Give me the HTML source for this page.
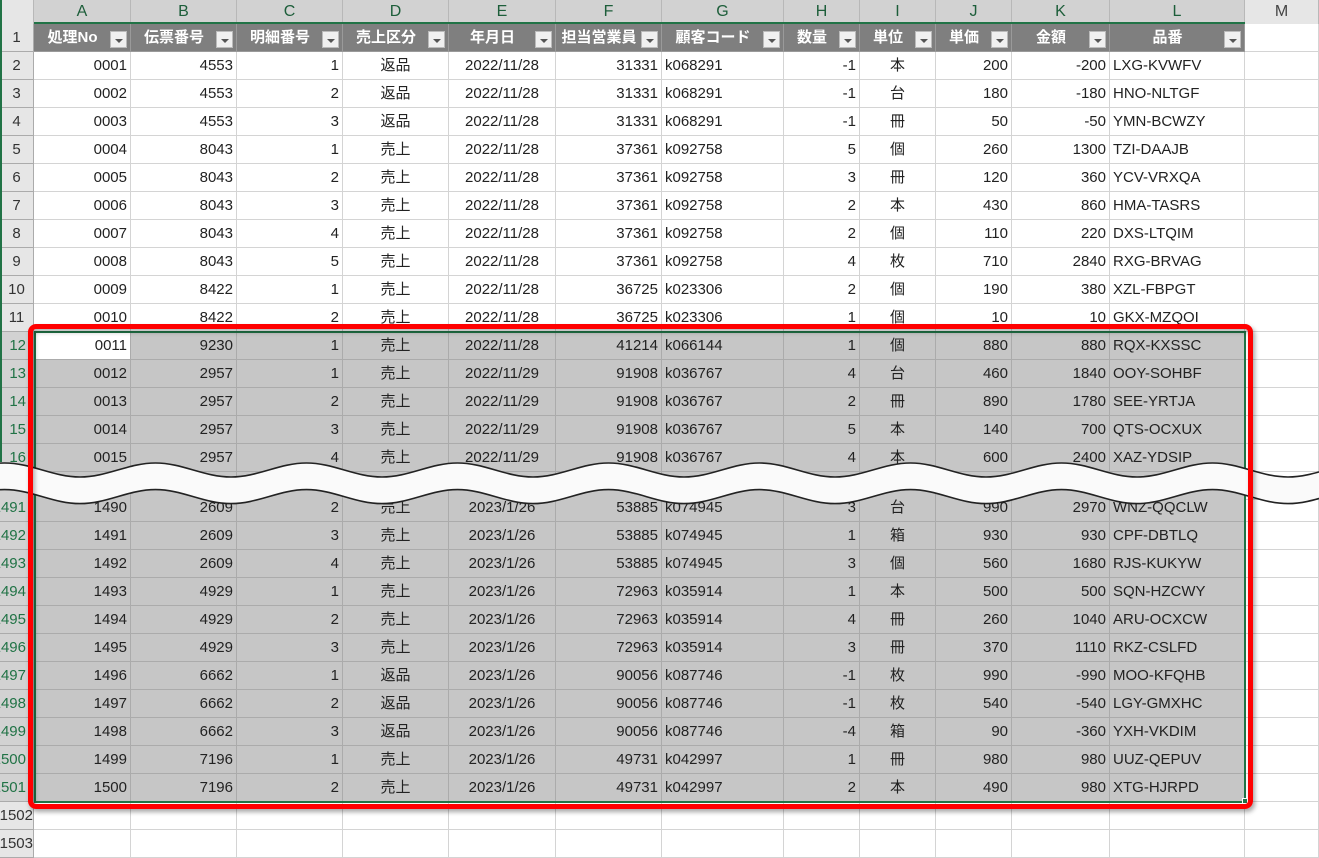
<!DOCTYPE html>
<html><head><meta charset="utf-8">
<style>
*{margin:0;padding:0;box-sizing:border-box}
body{width:1319px;height:856px;overflow:hidden;background:#fff;position:relative;font-family:"Liberation Sans","Noto Sans CJK JP",sans-serif;font-size:15px;color:#222}
.r{position:absolute;left:0;height:28px;display:flex;width:1319px}
.c{height:28px;border-right:1px solid #d4d4d4;border-bottom:1px solid #d4d4d4;padding:0 3px;line-height:28px;white-space:nowrap;overflow:hidden;flex:none;position:relative}
.c:nth-child(1){width:34px;background:#e6e6e6;border-color:#ababab;text-align:center;padding:0;color:#333;font-size:15px;overflow:visible;direction:rtl}
.c:nth-child(2){width:97px;text-align:right}
.c:nth-child(3){width:106px;text-align:right}
.c:nth-child(4){width:106px;text-align:right}
.c:nth-child(5){width:106px;text-align:center}
.c:nth-child(6){width:107px;text-align:center}
.c:nth-child(7){width:106px;text-align:right}
.c:nth-child(8){width:122px;text-align:left}
.c:nth-child(9){width:76px;text-align:right}
.c:nth-child(10){width:76px;text-align:center}
.c:nth-child(11){width:76px;text-align:right}
.c:nth-child(12){width:98px;text-align:right}
.c:nth-child(13){width:135px;text-align:left}
.c:nth-child(14){width:74px}
.s .c:nth-child(n+2):nth-child(-n+13){background:#c6c6c6;border-color:#ababab}
.s .c:nth-child(1){background:#d2d2d2;color:#217346;text-align:right;padding-right:7px}
.s .c.w{background:#fff!important}
.hd .c:nth-child(n+2):nth-child(-n+13){background:#7f7f7f;color:#fff;font-weight:bold;text-align:center;padding-right:22px;border-color:#9a9a9a}
.fb{position:absolute;right:3px;top:7px;width:17px;height:17px;background:#f0f0f0;border:1px solid #bbb}
.fb:after{content:"";position:absolute;left:4px;top:7px;border-left:4px solid transparent;border-right:4px solid transparent;border-top:4px solid #555}
.ch{position:absolute;top:0;left:0;height:24px;display:flex;border-bottom:1px solid #ababab}
.ch div{height:24px;border-right:1px solid #b8b8b8;background:#d2d2d2;text-align:center;line-height:24px;color:#1d5e3a;font-size:16px;flex:none}
</style></head><body>
<div class="ch">
<div style="width:34px;background:#e6e6e6"></div><div style="width:97px">A</div><div style="width:106px">B</div><div style="width:106px">C</div><div style="width:106px">D</div><div style="width:107px">E</div><div style="width:106px">F</div><div style="width:122px">G</div><div style="width:76px">H</div><div style="width:76px">I</div><div style="width:76px">J</div><div style="width:98px">K</div><div style="width:135px">L</div><div style="width:74px;background:#e6e6e6;color:#444">M</div>
</div>
<div style="position:absolute;left:34px;top:22px;width:1211px;height:2px;background:#217346"></div>

<div class="r hd" style="top:24px"><div class="c">1</div><div class="c">処理No<span class="fb"></span></div><div class="c">伝票番号<span class="fb"></span></div><div class="c">明細番号<span class="fb"></span></div><div class="c">売上区分<span class="fb"></span></div><div class="c">年月日<span class="fb"></span></div><div class="c">担当営業員<span class="fb"></span></div><div class="c">顧客コード<span class="fb"></span></div><div class="c">数量<span class="fb"></span></div><div class="c">単位<span class="fb"></span></div><div class="c">単価<span class="fb"></span></div><div class="c">金額<span class="fb"></span></div><div class="c">品番<span class="fb"></span></div><div class="c"></div></div>

<div class="r" style="top:52px"><div class="c">2</div><div class="c">0001</div><div class="c">4553</div><div class="c">1</div><div class="c">返品</div><div class="c">2022/11/28</div><div class="c">31331</div><div class="c">k068291</div><div class="c">-1</div><div class="c">本</div><div class="c">200</div><div class="c">-200</div><div class="c">LXG-KVWFV</div><div class="c"></div></div>
<div class="r" style="top:80px"><div class="c">3</div><div class="c">0002</div><div class="c">4553</div><div class="c">2</div><div class="c">返品</div><div class="c">2022/11/28</div><div class="c">31331</div><div class="c">k068291</div><div class="c">-1</div><div class="c">台</div><div class="c">180</div><div class="c">-180</div><div class="c">HNO-NLTGF</div><div class="c"></div></div>
<div class="r" style="top:108px"><div class="c">4</div><div class="c">0003</div><div class="c">4553</div><div class="c">3</div><div class="c">返品</div><div class="c">2022/11/28</div><div class="c">31331</div><div class="c">k068291</div><div class="c">-1</div><div class="c">冊</div><div class="c">50</div><div class="c">-50</div><div class="c">YMN-BCWZY</div><div class="c"></div></div>
<div class="r" style="top:136px"><div class="c">5</div><div class="c">0004</div><div class="c">8043</div><div class="c">1</div><div class="c">売上</div><div class="c">2022/11/28</div><div class="c">37361</div><div class="c">k092758</div><div class="c">5</div><div class="c">個</div><div class="c">260</div><div class="c">1300</div><div class="c">TZI-DAAJB</div><div class="c"></div></div>
<div class="r" style="top:164px"><div class="c">6</div><div class="c">0005</div><div class="c">8043</div><div class="c">2</div><div class="c">売上</div><div class="c">2022/11/28</div><div class="c">37361</div><div class="c">k092758</div><div class="c">3</div><div class="c">冊</div><div class="c">120</div><div class="c">360</div><div class="c">YCV-VRXQA</div><div class="c"></div></div>
<div class="r" style="top:192px"><div class="c">7</div><div class="c">0006</div><div class="c">8043</div><div class="c">3</div><div class="c">売上</div><div class="c">2022/11/28</div><div class="c">37361</div><div class="c">k092758</div><div class="c">2</div><div class="c">本</div><div class="c">430</div><div class="c">860</div><div class="c">HMA-TASRS</div><div class="c"></div></div>
<div class="r" style="top:220px"><div class="c">8</div><div class="c">0007</div><div class="c">8043</div><div class="c">4</div><div class="c">売上</div><div class="c">2022/11/28</div><div class="c">37361</div><div class="c">k092758</div><div class="c">2</div><div class="c">個</div><div class="c">110</div><div class="c">220</div><div class="c">DXS-LTQIM</div><div class="c"></div></div>
<div class="r" style="top:248px"><div class="c">9</div><div class="c">0008</div><div class="c">8043</div><div class="c">5</div><div class="c">売上</div><div class="c">2022/11/28</div><div class="c">37361</div><div class="c">k092758</div><div class="c">4</div><div class="c">枚</div><div class="c">710</div><div class="c">2840</div><div class="c">RXG-BRVAG</div><div class="c"></div></div>
<div class="r" style="top:276px"><div class="c">10</div><div class="c">0009</div><div class="c">8422</div><div class="c">1</div><div class="c">売上</div><div class="c">2022/11/28</div><div class="c">36725</div><div class="c">k023306</div><div class="c">2</div><div class="c">個</div><div class="c">190</div><div class="c">380</div><div class="c">XZL-FBPGT</div><div class="c"></div></div>
<div class="r" style="top:304px"><div class="c">11</div><div class="c">0010</div><div class="c">8422</div><div class="c">2</div><div class="c">売上</div><div class="c">2022/11/28</div><div class="c">36725</div><div class="c">k023306</div><div class="c">1</div><div class="c">個</div><div class="c">10</div><div class="c">10</div><div class="c">GKX-MZQOI</div><div class="c"></div></div>
<div class="r s" style="top:332px"><div class="c">12</div><div class="c w">0011</div><div class="c">9230</div><div class="c">1</div><div class="c">売上</div><div class="c">2022/11/28</div><div class="c">41214</div><div class="c">k066144</div><div class="c">1</div><div class="c">個</div><div class="c">880</div><div class="c">880</div><div class="c">RQX-KXSSC</div><div class="c"></div></div>
<div class="r s" style="top:360px"><div class="c">13</div><div class="c">0012</div><div class="c">2957</div><div class="c">1</div><div class="c">売上</div><div class="c">2022/11/29</div><div class="c">91908</div><div class="c">k036767</div><div class="c">4</div><div class="c">台</div><div class="c">460</div><div class="c">1840</div><div class="c">OOY-SOHBF</div><div class="c"></div></div>
<div class="r s" style="top:388px"><div class="c">14</div><div class="c">0013</div><div class="c">2957</div><div class="c">2</div><div class="c">売上</div><div class="c">2022/11/29</div><div class="c">91908</div><div class="c">k036767</div><div class="c">2</div><div class="c">冊</div><div class="c">890</div><div class="c">1780</div><div class="c">SEE-YRTJA</div><div class="c"></div></div>
<div class="r s" style="top:416px"><div class="c">15</div><div class="c">0014</div><div class="c">2957</div><div class="c">3</div><div class="c">売上</div><div class="c">2022/11/29</div><div class="c">91908</div><div class="c">k036767</div><div class="c">5</div><div class="c">本</div><div class="c">140</div><div class="c">700</div><div class="c">QTS-OCXUX</div><div class="c"></div></div>
<div class="r s" style="top:444px"><div class="c">16</div><div class="c">0015</div><div class="c">2957</div><div class="c">4</div><div class="c">売上</div><div class="c">2022/11/29</div><div class="c">91908</div><div class="c">k036767</div><div class="c">4</div><div class="c">本</div><div class="c">600</div><div class="c">2400</div><div class="c">XAZ-YDSIP</div><div class="c"></div></div>
<div class="r s" style="top:472px"><div class="c"></div><div class="c"></div><div class="c"></div><div class="c"></div><div class="c"></div><div class="c"></div><div class="c"></div><div class="c"></div><div class="c"></div><div class="c"></div><div class="c"></div><div class="c"></div><div class="c"></div><div class="c"></div></div>
<div class="r s" style="top:494px"><div class="c">1491</div><div class="c">1490</div><div class="c">2609</div><div class="c">2</div><div class="c">売上</div><div class="c">2023/1/26</div><div class="c">53885</div><div class="c">k074945</div><div class="c">3</div><div class="c">台</div><div class="c">990</div><div class="c">2970</div><div class="c">WNZ-QQCLW</div><div class="c"></div></div>
<div class="r s" style="top:522px"><div class="c">1492</div><div class="c">1491</div><div class="c">2609</div><div class="c">3</div><div class="c">売上</div><div class="c">2023/1/26</div><div class="c">53885</div><div class="c">k074945</div><div class="c">1</div><div class="c">箱</div><div class="c">930</div><div class="c">930</div><div class="c">CPF-DBTLQ</div><div class="c"></div></div>
<div class="r s" style="top:550px"><div class="c">1493</div><div class="c">1492</div><div class="c">2609</div><div class="c">4</div><div class="c">売上</div><div class="c">2023/1/26</div><div class="c">53885</div><div class="c">k074945</div><div class="c">3</div><div class="c">個</div><div class="c">560</div><div class="c">1680</div><div class="c">RJS-KUKYW</div><div class="c"></div></div>
<div class="r s" style="top:578px"><div class="c">1494</div><div class="c">1493</div><div class="c">4929</div><div class="c">1</div><div class="c">売上</div><div class="c">2023/1/26</div><div class="c">72963</div><div class="c">k035914</div><div class="c">1</div><div class="c">本</div><div class="c">500</div><div class="c">500</div><div class="c">SQN-HZCWY</div><div class="c"></div></div>
<div class="r s" style="top:606px"><div class="c">1495</div><div class="c">1494</div><div class="c">4929</div><div class="c">2</div><div class="c">売上</div><div class="c">2023/1/26</div><div class="c">72963</div><div class="c">k035914</div><div class="c">4</div><div class="c">冊</div><div class="c">260</div><div class="c">1040</div><div class="c">ARU-OCXCW</div><div class="c"></div></div>
<div class="r s" style="top:634px"><div class="c">1496</div><div class="c">1495</div><div class="c">4929</div><div class="c">3</div><div class="c">売上</div><div class="c">2023/1/26</div><div class="c">72963</div><div class="c">k035914</div><div class="c">3</div><div class="c">冊</div><div class="c">370</div><div class="c">1110</div><div class="c">RKZ-CSLFD</div><div class="c"></div></div>
<div class="r s" style="top:662px"><div class="c">1497</div><div class="c">1496</div><div class="c">6662</div><div class="c">1</div><div class="c">返品</div><div class="c">2023/1/26</div><div class="c">90056</div><div class="c">k087746</div><div class="c">-1</div><div class="c">枚</div><div class="c">990</div><div class="c">-990</div><div class="c">MOO-KFQHB</div><div class="c"></div></div>
<div class="r s" style="top:690px"><div class="c">1498</div><div class="c">1497</div><div class="c">6662</div><div class="c">2</div><div class="c">返品</div><div class="c">2023/1/26</div><div class="c">90056</div><div class="c">k087746</div><div class="c">-1</div><div class="c">枚</div><div class="c">540</div><div class="c">-540</div><div class="c">LGY-GMXHC</div><div class="c"></div></div>
<div class="r s" style="top:718px"><div class="c">1499</div><div class="c">1498</div><div class="c">6662</div><div class="c">3</div><div class="c">返品</div><div class="c">2023/1/26</div><div class="c">90056</div><div class="c">k087746</div><div class="c">-4</div><div class="c">箱</div><div class="c">90</div><div class="c">-360</div><div class="c">YXH-VKDIM</div><div class="c"></div></div>
<div class="r s" style="top:746px"><div class="c">1500</div><div class="c">1499</div><div class="c">7196</div><div class="c">1</div><div class="c">売上</div><div class="c">2023/1/26</div><div class="c">49731</div><div class="c">k042997</div><div class="c">1</div><div class="c">冊</div><div class="c">980</div><div class="c">980</div><div class="c">UUZ-QEPUV</div><div class="c"></div></div>
<div class="r s" style="top:774px"><div class="c">1501</div><div class="c">1500</div><div class="c">7196</div><div class="c">2</div><div class="c">売上</div><div class="c">2023/1/26</div><div class="c">49731</div><div class="c">k042997</div><div class="c">2</div><div class="c">本</div><div class="c">490</div><div class="c">980</div><div class="c">XTG-HJRPD</div><div class="c"></div></div>
<div class="r" style="top:802px"><div class="c">1502</div><div class="c"></div><div class="c"></div><div class="c"></div><div class="c"></div><div class="c"></div><div class="c"></div><div class="c"></div><div class="c"></div><div class="c"></div><div class="c"></div><div class="c"></div><div class="c"></div><div class="c"></div></div>
<div class="r" style="top:830px"><div class="c">1503</div><div class="c"></div><div class="c"></div><div class="c"></div><div class="c"></div><div class="c"></div><div class="c"></div><div class="c"></div><div class="c"></div><div class="c"></div><div class="c"></div><div class="c"></div><div class="c"></div><div class="c"></div></div>

<div style="position:absolute;left:34px;top:331px;width:1212px;height:472px;border:2px solid #217346"></div>
<div style="position:absolute;left:1242px;top:798px;width:6px;height:6px;background:#217346;border:1px solid #fff"></div>
<div style="position:absolute;left:0;top:0;width:2px;height:462px;background:#217346"></div>

<svg style="position:absolute;left:0;top:0" width="1319" height="856">
<defs><path id="w" fill="none" d="M-71 477 C-43.8 477 -22.7 463 4.5 463 S52.8 477 80 477 S128.3 463 155.5 463 S203.8 477 231 477 S279.3 463 306.5 463 S354.8 477 382 477 S430.3 463 457.5 463 S505.8 477 533 477 S581.3 463 608.5 463 S656.8 477 684 477 S732.3 463 759.5 463 S807.8 477 835 477 S883.3 463 910.5 463 S958.8 477 986 477 S1034.3 463 1061.5 463 S1109.8 477 1137 477 S1185.3 463 1212.5 463 S1260.8 477 1288 477 S1336.3 463 1363.5 463"/></defs>
<use href="#w" transform="translate(0,13.3)" stroke="#fafafa" stroke-width="26"/>
<use href="#w" stroke="#222" stroke-width="1.6"/>
<use href="#w" transform="translate(0,26.6)" stroke="#222" stroke-width="1.6"/>
</svg>

<div style="position:absolute;left:28px;top:324px;width:1225px;height:485px;border:5px solid #f00;border-radius:8px;box-shadow:2px 3px 5px rgba(0,0,0,.35),inset 2px 3px 5px rgba(0,0,0,.3)"></div>
</body></html>
